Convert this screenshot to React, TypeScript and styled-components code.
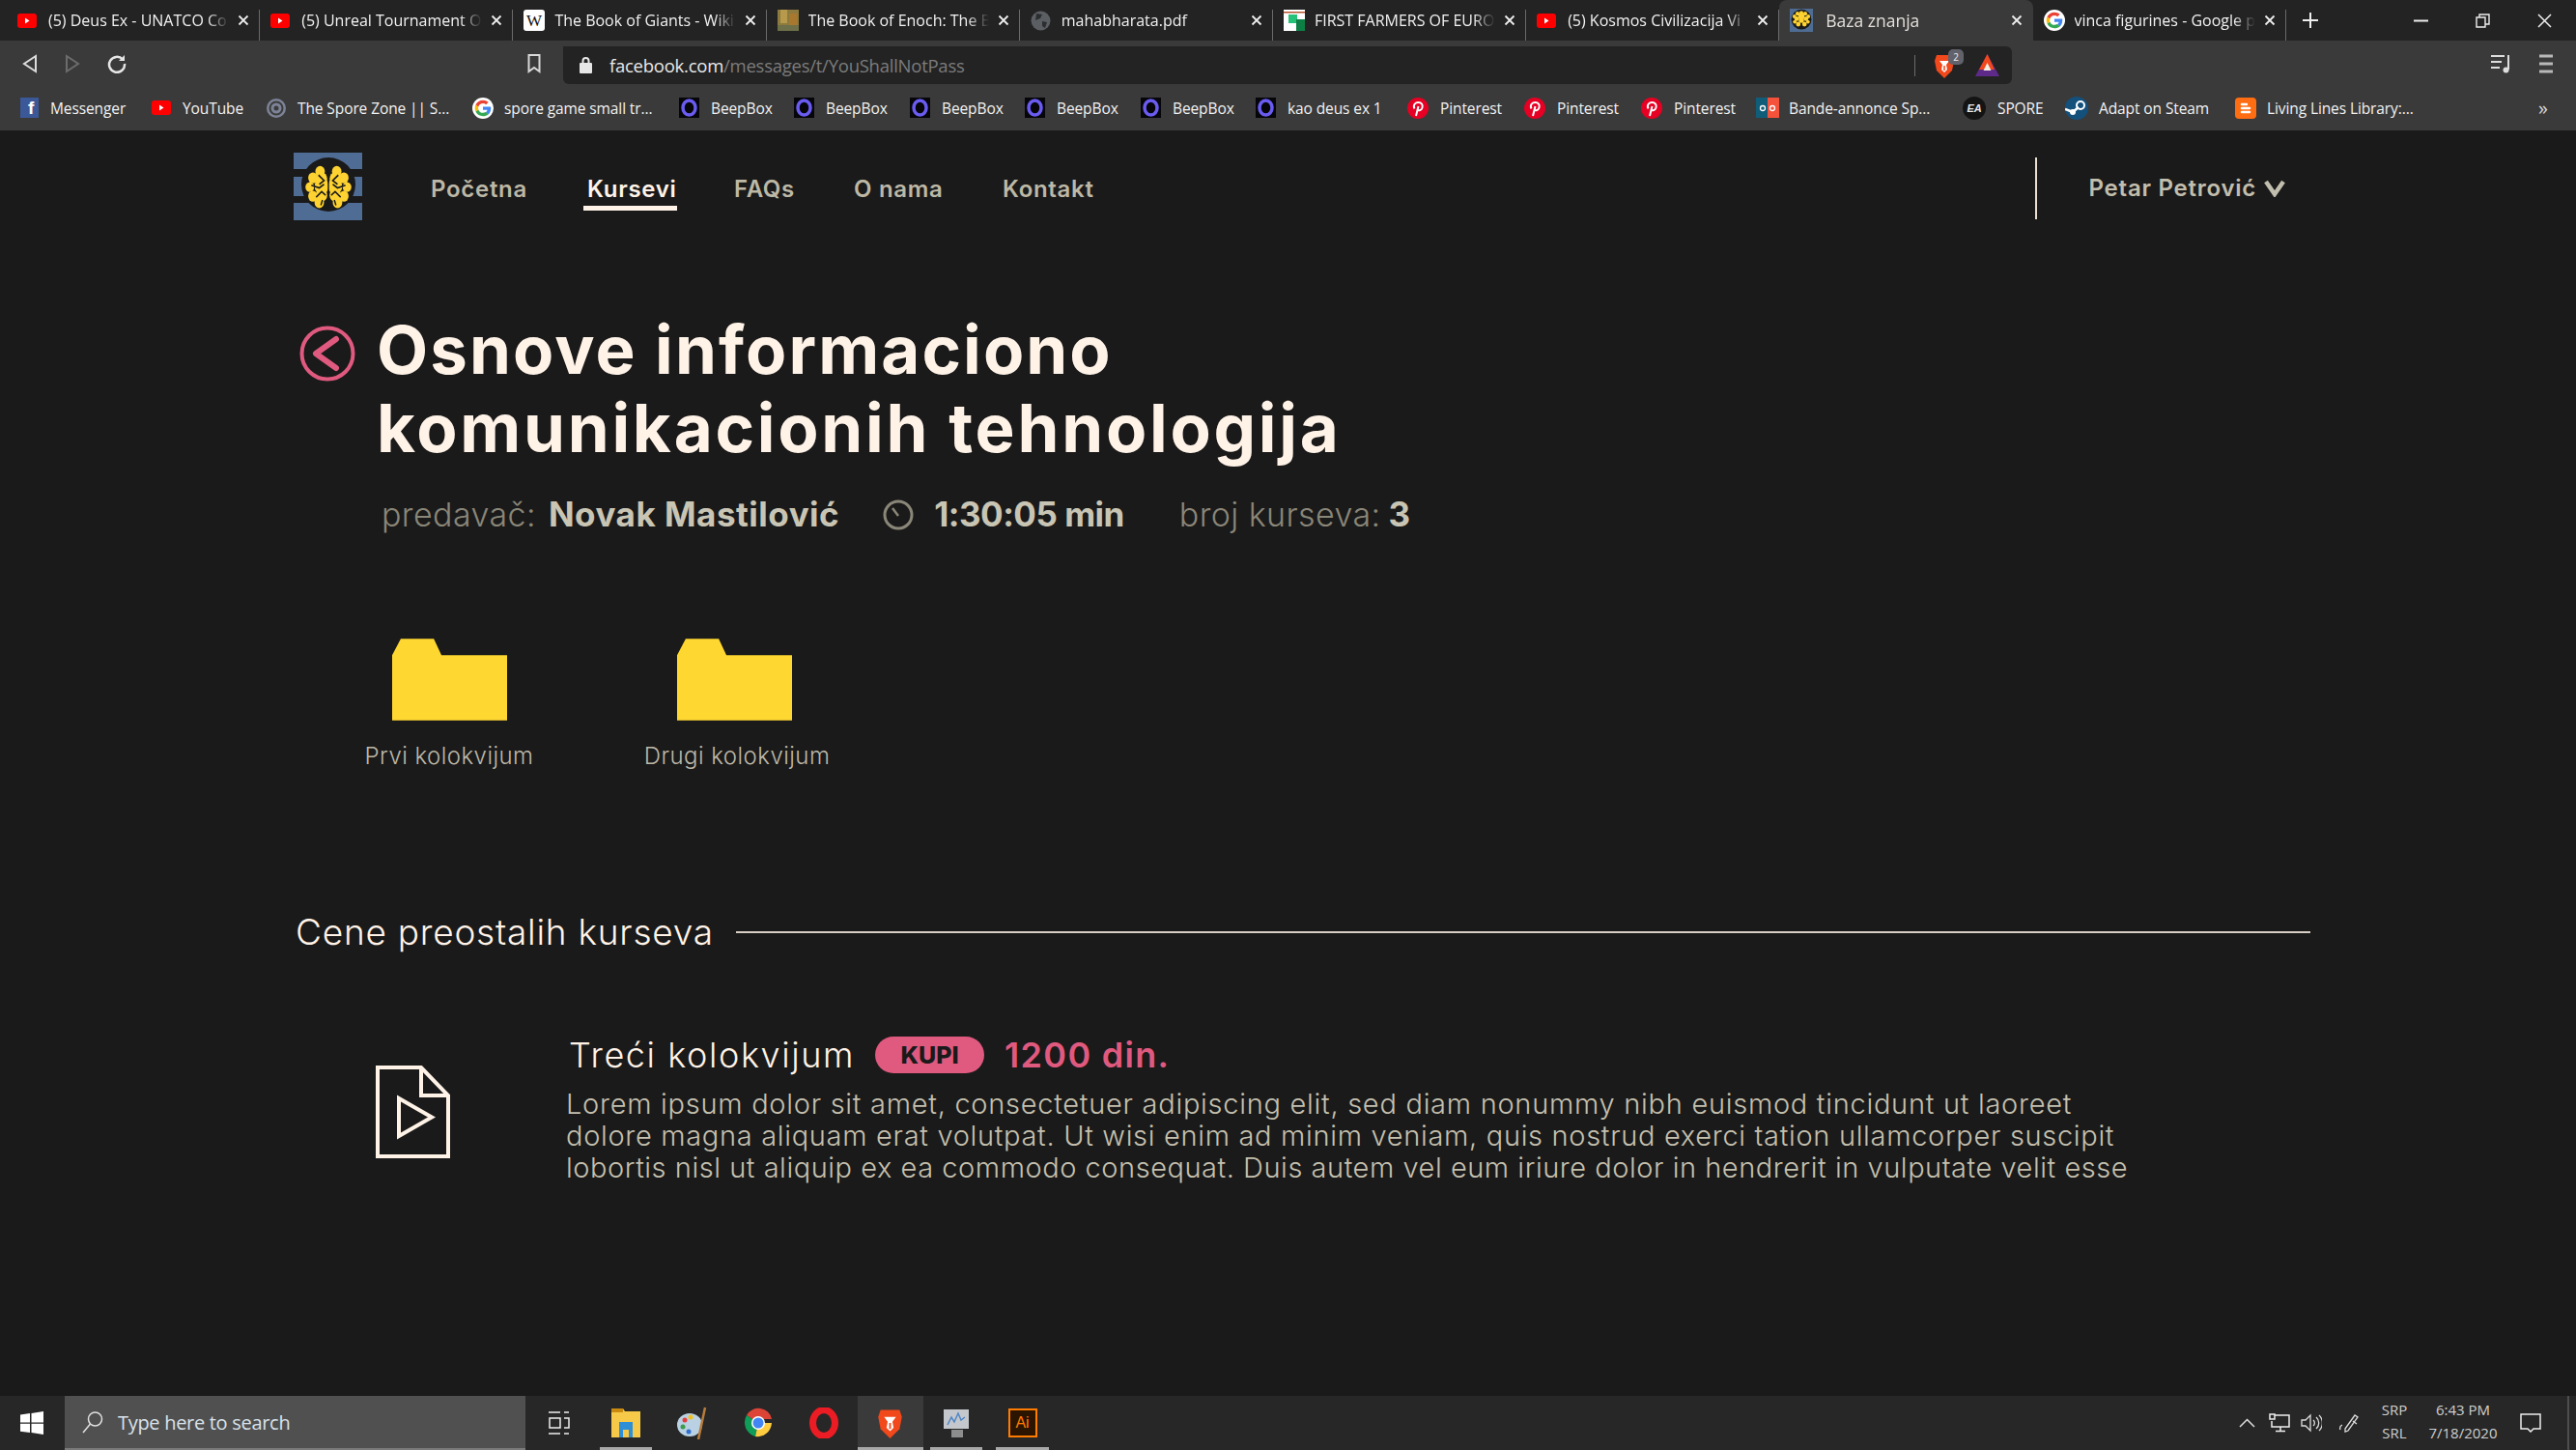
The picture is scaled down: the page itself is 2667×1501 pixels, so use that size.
import React from "react";
import styled, { createGlobalStyle } from "styled-components";

const GlobalStyle = createGlobalStyle`
  html, body { margin: 0; padding: 0; background: #1a1a1a; overflow: hidden; }
  * { box-sizing: border-box; }
`;

const PAGE_FONT = `Inter, "Open Sans", sans-serif`;
const UI_FONT = `"Open Sans", "Noto Sans", sans-serif`;

/* ---------- favicons ---------- */

const YouTubeIco = () => (
  <svg width="20" height="15" viewBox="0 0 20 15"><rect width="20" height="15" rx="3" fill="#f00" /><path d="M8 4.5l4.5 3-4.5 3z" fill="#fff" /></svg>
);
const WikiIco = () => (
  <svg width="22" height="22" viewBox="0 0 22 22"><rect width="22" height="22" rx="3" fill="#fff" /><text x="11" y="17" textAnchor="middle" fontSize="17" fontFamily="Liberation Serif" fill="#111">W</text></svg>
);
const BookIco = () => (
  <svg width="22" height="22" viewBox="0 0 22 22"><rect width="22" height="22" fill="#8d7a3e" /><rect x="3" y="0" width="7" height="14" fill="#b79a4c" /><rect x="12" y="4" width="8" height="12" fill="#a8782f" /><rect y="16" width="22" height="6" fill="#6d7048" /></svg>
);
const GlobeIco = () => (
  <svg width="21" height="21" viewBox="0 0 21 21"><circle cx="10.5" cy="10.5" r="10" fill="#5b5e63" /><path d="M6 3l6 1-2 4-5 2zM12 11l5 1-2 6-3-2z" fill="#2c2d2f" /></svg>
);
const SheetIco = () => (
  <svg width="22" height="22" viewBox="0 0 22 22"><rect width="22" height="22" fill="#fff" /><rect x="0" y="2" width="22" height="1.5" fill="#b5532f" /><rect x="5" y="5" width="9" height="9" fill="#27c27a" /><rect x="13" y="10" width="9" height="12" fill="#0d7f45" /></svg>
);
const BrainDots = () => (
  <g fill="#fdd231">
    <circle cx="15" cy="15" r="3.4" /><circle cx="9" cy="13" r="3" /><circle cx="6" cy="10" r="2.4" /><circle cx="6.5" cy="17" r="2.4" /><circle cx="10" cy="6.5" r="2.6" /><circle cx="15" cy="5.5" r="2.6" /><circle cx="20" cy="6.5" r="2.6" /><circle cx="24" cy="10" r="2.4" /><circle cx="23.5" cy="17" r="2.4" /><circle cx="21" cy="13" r="3" /><circle cx="11" cy="20" r="3" /><circle cx="19" cy="20" r="3" /><circle cx="15" cy="10" r="4" />
  </g>
);
const SmallBrain = () => (
  <svg width="24" height="24" viewBox="0 0 30 30"><rect width="30" height="30" fill="#4f6d94" /><circle cx="15" cy="14" r="13" fill="#1a1a1a" /><BrainDots /></svg>
);
const GoogleIco = ({ size = 22 }: { size?: number }) => (
  <svg width={size} height={size} viewBox="0 0 24 24">
    <circle cx="12" cy="12" r="12" fill="#fff" />
    <path d="M21 12.2c0-.7 0-1.3-.2-1.9H12v3.6h5c-.2 1.2-.9 2.1-1.9 2.8l3 2.3c1.800-1.600 2.900-4 2.900-6.800z" fill="#4285f4" />
    <path d="M12 21c2.500 0 4.500-.8 6.100-2.300l-3-2.300c-.8.600-1.900.9-3.100.9-2.400 0-4.400-1.600-5.100-3.800l-3.100 2.400C5.300 19 8.400 21 12 21z" fill="#34a853" />
    <path d="M6.900 13.500c-.4-1-.4-2.100 0-3.100L3.800 8c-1.100 2.500-1.100 5.400 0 7.900z" fill="#fbbc05" />
    <path d="M12 6.600c1.300 0 2.500.5 3.500 1.400L18.200 5.300C16.500 3.800 14.400 3 12 3 8.400 3 5.300 5 3.800 8l3.100 2.400C7.600 8.200 9.600 6.600 12 6.600z" fill="#ea4335" />
  </svg>
);
const FacebookIco = styled.span`
  flex: 0 0 19px;
  width: 19px;
  height: 21px;
  padding-left: 8px;
  background: #3b5998;
  color: #fff;
  font-family: "Liberation Sans", sans-serif;
  font-size: 19px;
  font-weight: 700;
  line-height: 22px;
  letter-spacing: 0;
`;
const SporeIco = () => (
  <svg width="22" height="22" viewBox="0 0 22 22"><circle cx="11" cy="11" r="10" fill="#7d8397" /><circle cx="11" cy="11" r="6.500" fill="none" stroke="#3a3a3a" strokeWidth="2" /><circle cx="11" cy="11" r="2.500" fill="#3a3a3a" /></svg>
);
const BeepIco = () => (
  <svg width="21" height="21" viewBox="0 0 21 21"><rect width="21" height="21" fill="#05050a" /><ellipse cx="10.500" cy="10.500" rx="6.500" ry="7.500" fill="none" stroke="#6a5cf0" strokeWidth="3.500" /></svg>
);
const PinterestIco = () => (
  <svg width="22" height="22" viewBox="0 0 22 22"><circle cx="11" cy="11" r="11" fill="#e60023" /><path d="M9 19l2.500-10M7.500 11.500c-2-4 1-6.500 4-6.500s5 2.200 4 5.500-4.500 3.500-5 1.500" fill="none" stroke="#fff" strokeWidth="2" /></svg>
);
const BandeIco = () => (
  <svg width="24" height="21" viewBox="0 0 24 21"><rect width="12" height="21" fill="#0f5d78" /><rect x="12" width="12" height="21" fill="#f4523a" /><circle cx="7" cy="11" r="2.500" fill="none" stroke="#fff" strokeWidth="1.300" /><circle cx="17" cy="11" r="2.500" fill="none" stroke="#fff" strokeWidth="1.300" /></svg>
);
const EaIco = () => (
  <svg width="24" height="24" viewBox="0 0 24 24"><circle cx="12" cy="12" r="12" fill="#141414" /><text x="12" y="16" textAnchor="middle" fontSize="11" fontWeight="700" fontStyle="italic" fontFamily="Liberation Sans" fill="#e8e8e8">EA</text></svg>
);
const SteamIco = () => (
  <svg width="24" height="24" viewBox="0 0 24 24"><circle cx="12" cy="12" r="12" fill="#14507c" /><path d="M0 13l8 3 6-5" stroke="#fff" strokeWidth="2.500" fill="none" /><circle cx="16" cy="9" r="4" fill="none" stroke="#fff" strokeWidth="2" /><circle cx="8" cy="16" r="3" fill="#fff" /></svg>
);
const BloggerIco = () => (
  <svg width="22" height="22" viewBox="0 0 22 22"><rect width="22" height="22" rx="4" fill="#ff6d12" /><path d="M7 7h5M7 11h8M7 15h8" stroke="#fff" strokeWidth="2.500" strokeLinecap="round" /></svg>
);
const BraveIco = ({ w = 22, h = 26 }: { w?: number; h?: number }) => (
  <svg width={w} height={h} viewBox="0 0 22 26">
    <path d="M3 2h16l2 6-2 10-8 8-8-8L1 8z" fill="#f1481c" />
    <path d="M6 8h10l-3 4 1 5-3 3-3-3 1-5z" fill="#fff" />
    <path d="M11 13v5" stroke="#f1481c" strokeWidth="1.500" />
  </svg>
);

/* ---------- browser chrome ---------- */

const TabStrip = styled.div`
  display: flex;
  align-items: stretch;
  height: 42px;
  padding-left: 7px;
  background: #232323;
  font-family: ${UI_FONT};
`;

const Tab = styled.div<{ $active?: boolean }>`
  position: relative;
  display: flex;
  align-items: center;
  width: 262.2px;
  padding: 0 11px;
  background: ${(p) => (p.$active ? "#3a3a3a" : "transparent")};
  border-radius: ${(p) => (p.$active ? "8px 8px 0 0" : "0")};
  &::after {
    content: "";
    display: ${(p) => (p.$active ? "none" : "block")};
    position: absolute;
    right: 0;
    top: 10px;
    bottom: 0;
    width: 1px;
    background: #6a6a6a;
  }
`;

const TabIcon = styled.span`
  flex: 0 0 25px;
  display: flex;
  align-items: center;
  justify-content: flex-start;
  margin-right: 7px;
`;

const TabTitle = styled.span<{ $active?: boolean }>`
  flex: 1;
  min-width: 0;
  margin-left: ${(p) => (p.$active ? "5px" : "0")};
  white-space: nowrap;
  font-size: ${(p) => (p.$active ? "17.5px" : "16px")};
  color: ${(p) => (p.$active ? "#e4dfda" : "#f1f1f1")};
  -webkit-mask: linear-gradient(to right, #000 88%, transparent 100%) no-repeat;
  mask: linear-gradient(to right, #000 88%, transparent 100%) no-repeat;
`;

const TabClose = styled.span`
  flex: 0 0 12px;
  margin-left: 9px;
  display: flex;
`;

const CloseGlyph = () => (
  <svg width="12" height="12" viewBox="0 0 12 12"><path d="M1.500 1.500l9 9M10.500 1.500l-9 9" stroke="#eee" strokeWidth="1.800" /></svg>
);

const NewTab = styled.span`
  margin-left: 17px;
  display: flex;
  align-items: center;
`;

const WindowControls = styled.div`
  margin-left: auto;
  display: flex;
  align-items: center;
  gap: 49px;
  padding-right: 25px;
`;

const Toolbar = styled.div`
  display: flex;
  align-items: center;
  height: 46px;
  background: #3a3a3a;
  padding: 2px 0 0 23px;
  font-family: ${UI_FONT};
`;

const NavIcons = styled.div`
  display: flex;
  align-items: center;
  gap: 28px;
  width: 523px;
`;

const Omnibox = styled.div`
  display: flex;
  align-items: center;
  width: 1500px;
  height: 39px;
  margin-left: 23px;
  margin-top: 3px;
  padding: 0 13px 0 17px;
  background: #232323;
  border-radius: 0 6px 6px 6px;
`;

const UrlHost = styled.span`
  margin-left: 18px;
  font-size: 18.5px;
  letter-spacing: -0.25px;
  color: #e8e8e8;
`;

const UrlPath = styled.span`
  font-size: 18.5px;
  letter-spacing: -0.25px;
  color: #7c7c7c;
`;

const OmniRight = styled.div`
  margin-left: auto;
  display: flex;
  align-items: center;
  gap: 21px;
  padding-left: 19px;
  border-left: 1px solid #6b6b6b;
  height: 22px;
`;

const BraveWrap = styled.span`
  position: relative;
  display: flex;
`;

const BraveBadge = styled.span`
  position: absolute;
  left: 15px;
  top: -4px;
  width: 16px;
  height: 16px;
  border-radius: 5px;
  background: #62626c;
  color: #eee;
  font-size: 10px;
  line-height: 16px;
  text-align: center;
`;

const ToolRight = styled.div`
  margin-left: auto;
  display: flex;
  align-items: center;
  gap: 28px;
  padding-right: 24px;
`;

const BookmarkBar = styled.div`
  display: flex;
  align-items: center;
  height: 47px;
  padding: 0 29px 0 21px;
  background: #3a3a3a;
  font-family: ${UI_FONT};
`;

const Bookmark = styled.div<{ $w: number; $gap: number }>`
  display: flex;
  align-items: center;
  flex: 0 0 ${(p) => p.$w}px;
  gap: ${(p) => p.$gap}px;
  font-size: 15.500px;
  letter-spacing: -0.1px;
  color: #f2f2f2;
  white-space: nowrap;
`;

const MoreMarks = styled.span`
  margin-left: auto;
  color: #d8d8d8;
  font-size: 20px;
`;

/* ---------- page ---------- */

const Screen = styled.div`
  display: flex;
  flex-direction: column;
  width: 2667px;
  height: 1501px;
  background: #1a1a1a;
`;

const Main = styled.main`
  flex: 1;
  padding: 23px 275px 0 304px;
  font-family: ${PAGE_FONT};
`;

const TopNav = styled.nav`
  display: flex;
  align-items: center;
  height: 70px;
`;

const NavLinks = styled.div`
  display: flex;
  align-items: center;
  margin-left: 71px;
  padding-top: 4px;
`;

const NavLink = styled.a<{ $active?: boolean; $w: number }>`
  position: relative;
  display: block;
  width: ${(p) => p.$w}px;
  font-size: 24px;
  font-weight: 600;
  letter-spacing: 0.7px;
  color: ${(p) => (p.$active ? "#fff3e8" : "#bdb8a6")};
  &::after {
    content: "";
    display: ${(p) => (p.$active ? "block" : "none")};
    position: absolute;
    left: -4px;
    top: 32px;
    width: 97px;
    height: 5px;
    background: #fff3e8;
  }
`;

const UserBox = styled.div`
  margin-left: auto;
  display: flex;
  align-items: center;
  height: 64px;
  margin-top: 3px;
  padding-left: 54px;
  padding-right: 26px;
  border-left: 2px solid #e9dfd3;
`;

const UserName = styled.span`
  font-size: 24px;
  font-weight: 600;
  letter-spacing: 0.75px;
  color: #c2bead;
  margin-right: 8px;
`;

const TitleRow = styled.div`
  display: flex;
  align-items: flex-start;
  margin-top: 94px;
`;

const BackButton = styled.span`
  display: flex;
  margin-left: 6px;
  margin-top: 15px;
  margin-right: 22px;
`;

const Title = styled.h1`
  margin: 0;
  font-size: 69px;
  line-height: 81px;
  font-weight: 700;
  color: #fff3e8;
`;

const TitleLine = styled.span<{ $ls: number }>`
  display: block;
  letter-spacing: ${(p) => p.$ls}px;
  white-space: nowrap;
`;

const MetaRow = styled.div`
  display: flex;
  align-items: baseline;
  margin-top: 26px;
  margin-left: 91px;
  line-height: 44px;
`;

const MetaLabel = styled.span<{ $left?: number }>`
  margin-left: ${(p) => p.$left ?? 0}px;
  font-size: 34px;
  font-weight: 300;
  letter-spacing: 0.4px;
  color: #8a8678;
`;

const MetaValue = styled.span<{ $left?: number; $ls?: number }>`
  margin-left: ${(p) => p.$left ?? 0}px;
  font-size: 35px;
  letter-spacing: ${(p) => p.$ls ?? 0}px;
  color: #c9c5b4;
  font-weight: 700;
`;

const ClockWrap = styled.span`
  align-self: center;
  display: flex;
  margin-left: 45px;
  margin-right: 21px;
`;

const Folders = styled.div`
  display: flex;
  margin-top: 106px;
  margin-left: 36px;
`;

const FolderItem = styled.div<{ $w: number }>`
  display: flex;
  flex-direction: column;
  align-items: center;
  width: ${(p) => p.$w}px;
`;

const FolderLabel = styled.span<{ $shift?: number }>`
  margin-top: 20px;
  margin-left: ${(p) => p.$shift ?? 0}px;
  font-size: 24px;
  line-height: 34px;
  font-weight: 300;
  letter-spacing: 0.45px;
  color: #bdb8a9;
  white-space: nowrap;
`;

const SectionHead = styled.div`
  display: flex;
  align-items: center;
  gap: 23px;
  margin-top: 141px;
  margin-left: 2px;
`;

const SectionTitle = styled.h2`
  margin: 0;
  font-size: 37px;
  line-height: 48px;
  font-weight: 300;
  letter-spacing: 0.75px;
  color: #fff3e8;
  white-space: nowrap;
`;

const SectionLine = styled.span`
  flex: 1;
  height: 2px;
  background: #d8cfc4;
`;

const CourseRow = styled.div`
  display: flex;
  margin-top: 84px;
`;

const CourseIcon = styled.span`
  display: flex;
  margin-left: 85px;
  margin-top: 30px;
  margin-right: 123px;
  flex: 0 0 auto;
`;

const CourseHead = styled.div`
  display: flex;
  align-items: center;
  gap: 21px;
  height: 38px;
`;

const CourseName = styled.span`
  font-size: 36px;
  font-weight: 300;
  letter-spacing: 1.6px;
  color: #fff3e8;
`;

const BuyPill = styled.span`
  display: flex;
  align-items: center;
  justify-content: center;
  width: 113px;
  height: 38px;
  border-radius: 19px;
  background: #e0597f;
  color: #1a1a1a;
  font-size: 25px;
  font-weight: 800;
`;

const Price = styled.span`
  font-size: 36px;
  font-weight: 600;
  letter-spacing: 1.3px;
  color: #e0597f;
`;

const CourseText = styled.p`
  margin: 15px 0 0 -3px;
  font-size: 29px;
  line-height: 33px;
  font-weight: 300;
  color: #c5c0af;
  white-space: nowrap;
`;

const CourseLine = styled.span<{ $ls: number }>`
  display: block;
  letter-spacing: ${(p) => p.$ls}px;
`;

/* ---------- taskbar ---------- */

const Taskbar = styled.div`
  display: flex;
  align-items: stretch;
  height: 56px;
  background: #272727;
  font-family: ${UI_FONT};
  color: #e8e8e8;
`;

const StartSlot = styled.div`
  flex: 0 0 67px;
  display: flex;
  align-items: center;
  padding-left: 21px;
`;

const SearchBox = styled.div`
  flex: 0 0 477px;
  display: flex;
  align-items: center;
  gap: 14px;
  padding-left: 17px;
  background: #505050;
  border-bottom: 2px solid #7a7a7a;
  color: #d9e2ea;
  font-size: 20px;
  letter-spacing: -0.3px;
`;

const TaskSlot = styled.div<{ $on?: boolean; $current?: boolean }>`
  position: relative;
  flex: 0 0 68.400px;
  display: flex;
  align-items: center;
  justify-content: center;
  background: ${(p) => (p.$current ? "#3a3a3a" : "transparent")};
  &::after {
    content: "";
    display: ${(p) => (p.$on ? "block" : "none")};
    position: absolute;
    bottom: 0;
    left: ${(p) => (p.$current ? "0" : "7px")};
    right: ${(p) => (p.$current ? "0" : "7px")};
    height: 3px;
    background: #a8a8a8;
  }
`;

const TaskViewSlot = styled.div`
  flex: 0 0 70px;
  display: flex;
  align-items: center;
  justify-content: center;
`;

const AiIcon = styled.span`
  width: 30px;
  height: 30px;
  display: flex;
  align-items: center;
  justify-content: center;
  border: 2px solid #ff7c00;
  background: #2b1400;
  color: #ff7c00;
  font-size: 16px;
  font-family: "Liberation Sans", sans-serif;
`;

const Tray = styled.div`
  margin-left: auto;
  display: flex;
  align-items: center;
  padding-right: 7px;
`;

const TrayIcon = styled.span<{ $left: number }>`
  display: flex;
  margin-left: ${(p) => p.$left}px;
`;

const TrayText = styled.div<{ $w: number; $left: number }>`
  width: ${(p) => p.$w}px;
  margin-left: ${(p) => p.$left}px;
  display: flex;
  flex-direction: column;
  align-items: center;
  gap: 3px;
  margin-top: -3px;
  font-size: 15px;
  line-height: 21px;
  color: #cfcfcf;
`;

const TrayEdge = styled.span`
  width: 2px;
  height: 56px;
  margin-left: 27px;
  background: #4d4d4d;
`;

/* ---------- data ---------- */

const tabs = [
  { icon: <YouTubeIco />, title: "(5) Deus Ex - UNATCO Co" },
  { icon: <YouTubeIco />, title: "(5) Unreal Tournament OS" },
  { icon: <WikiIco />, title: "The Book of Giants - Wiki" },
  { icon: <BookIco />, title: "The Book of Enoch: The B" },
  { icon: <GlobeIco />, title: "mahabharata.pdf" },
  { icon: <SheetIco />, title: "FIRST FARMERS OF EURO" },
  { icon: <YouTubeIco />, title: "(5) Kosmos Civilizacija Vi" },
  { icon: <SmallBrain />, title: "Baza znanja", active: true },
  { icon: <GoogleIco />, title: "vinca figurines - Google p" },
];

const bookmarks: { icon: React.ReactNode; label: string; w: number; gap?: number }[] = [
  { icon: <FacebookIco>f</FacebookIco>, label: "Messenger", w: 136 },
  { icon: <YouTubeIco />, label: "YouTube", w: 118 },
  { icon: <SporeIco />, label: "The Spore Zone || S...", w: 214, gap: 11 },
  { icon: <GoogleIco />, label: "spore game small tr...", w: 214, gap: 11 },
  { icon: <BeepIco />, label: "BeepBox", w: 119 },
  { icon: <BeepIco />, label: "BeepBox", w: 120 },
  { icon: <BeepIco />, label: "BeepBox", w: 119 },
  { icon: <BeepIco />, label: "BeepBox", w: 120 },
  { icon: <BeepIco />, label: "BeepBox", w: 119 },
  { icon: <BeepIco />, label: "kao deus ex 1", w: 157 },
  { icon: <PinterestIco />, label: "Pinterest", w: 121 },
  { icon: <PinterestIco />, label: "Pinterest", w: 121 },
  { icon: <PinterestIco />, label: "Pinterest", w: 119 },
  { icon: <BandeIco />, label: "Bande-annonce Sp...", w: 214, gap: 10 },
  { icon: <EaIco />, label: "SPORE", w: 106, gap: 12 },
  { icon: <SteamIco />, label: "Adapt on Steam", w: 176, gap: 11 },
  { icon: <BloggerIco />, label: "Living Lines Library:...", w: 240, gap: 11 },
];

const navItems = [
  { label: "Početna", w: 162 },
  { label: "Kursevi", w: 152, active: true },
  { label: "FAQs", w: 124 },
  { label: "O nama", w: 154 },
  { label: "Kontakt", w: 110 },
];

const Logo = () => (
  <svg width="71" height="70" viewBox="0 0 71 70">
    <rect width="71" height="70" fill="#4f6d94" />
    <rect y="17" width="71" height="8" fill="#1a1a1a" />
    <rect y="45" width="71" height="7" fill="#1a1a1a" />
    <circle cx="36" cy="33" r="28" fill="#1a1a1a" />
    <g transform="translate(36 37.500) scale(0.82 0.95) translate(-35.500 -33)">
      <g fill="#fdd231">
        <circle cx="25" cy="14" r="6" /><circle cx="16" cy="21" r="6" /><circle cx="12" cy="31" r="5.500" /><circle cx="16" cy="41" r="6" /><circle cx="24" cy="48" r="6" /><circle cx="27" cy="30" r="9" /><circle cx="27" cy="22" r="7" /><circle cx="27" cy="40" r="7" />
        <circle cx="46" cy="14" r="6" /><circle cx="55" cy="21" r="6" /><circle cx="59" cy="31" r="5.500" /><circle cx="55" cy="41" r="6" /><circle cx="47" cy="48" r="6" /><circle cx="44" cy="30" r="9" /><circle cx="44" cy="22" r="7" /><circle cx="44" cy="40" r="7" />
      </g>
      <path d="M35.500 10v44M23 18l7 6-6 4M14 29l10 3 6-4M20 42l7-6 5 4M26 51l2-6M48 18l-7 6 6 4M57 29l-10 3-6-4M51 42l-7-6-5 4M45 51l-2-6" fill="none" stroke="#1a1a1a" strokeWidth="1.800" />
    </g>
  </svg>
);

const App = () => {
  return (
    <Screen>
      <GlobalStyle />
      <TabStrip>
        {tabs.map((t) => (
          <Tab key={t.title} $active={t.active}>
            <TabIcon>{t.icon}</TabIcon>
            <TabTitle $active={t.active}>{t.title}</TabTitle>
            <TabClose><CloseGlyph /></TabClose>
          </Tab>
        ))}
        <NewTab>
          <svg width="16" height="16" viewBox="0 0 16 16"><path d="M8 0v16M0 8h16" stroke="#eee" strokeWidth="2" /></svg>
        </NewTab>
        <WindowControls>
          <svg width="15" height="15" viewBox="0 0 15 15"><path d="M0 7.500h15" stroke="#eee" strokeWidth="2" /></svg>
          <svg width="15" height="15" viewBox="0 0 15 15"><path d="M1 4h9v10H1zM4 4V1h10v10h-4" fill="none" stroke="#eee" strokeWidth="1.400" /></svg>
          <svg width="15" height="15" viewBox="0 0 15 15"><path d="M1 1l13 13M14 1L1 14" stroke="#eee" strokeWidth="1.500" /></svg>
        </WindowControls>
      </TabStrip>

      <Toolbar>
        <NavIcons>
          <svg width="16" height="20" viewBox="0 0 16 20"><path d="M14 2v16L2 10z" fill="none" stroke="#dcdcdc" strokeWidth="2" /></svg>
          <svg width="16" height="20" viewBox="0 0 16 20"><path d="M2 2v16l12-8z" fill="none" stroke="#6c6c6c" strokeWidth="2" /></svg>
          <svg width="20" height="20" viewBox="0 0 20 20"><path d="M16 5.500A8 8 0 1 0 18 10" fill="none" stroke="#e6e6e6" strokeWidth="2.500" /><path d="M18 1v6h-6z" fill="#e6e6e6" /></svg>
        </NavIcons>
        <svg width="14" height="20" viewBox="0 0 14 20"><path d="M1.500 1h11v17L7 14l-5.500 4z" fill="none" stroke="#d8d8d8" strokeWidth="2" /></svg>
        <Omnibox>
          <svg width="13" height="17" viewBox="0 0 13 17"><rect y="6" width="13" height="11" rx="1" fill="#e6e6e6" /><path d="M3.500 7V4a3 3 0 0 1 6 0v3" fill="none" stroke="#e6e6e6" strokeWidth="2" /></svg>
          <UrlHost>facebook.com</UrlHost>
          <UrlPath>/messages/t/YouShallNotPass</UrlPath>
          <OmniRight>
            <BraveWrap>
              <BraveIco />
              <BraveBadge>2</BraveBadge>
            </BraveWrap>
            <svg width="25" height="23" viewBox="0 0 25 23">
              <path d="M12.500 0L25 23H0z" fill="#5e2a8a" />
              <path d="M12.500 0L20 16H4z" fill="#f1481c" />
              <path d="M12.500 9l4 8h-8z" fill="#f4f0e8" />
            </svg>
          </OmniRight>
        </Omnibox>
        <ToolRight>
          <svg width="22" height="22" viewBox="0 0 22 22"><path d="M0 3h14M0 9h11M0 15h9" stroke="#ddd" strokeWidth="2" /><path d="M18 2v15" stroke="#ddd" strokeWidth="2" /><circle cx="15.500" cy="17.500" r="3" fill="#ddd" /></svg>
          <svg width="14" height="20" viewBox="0 0 14 20"><path d="M0 2h14M0 10h14M0 18h14" stroke="#b8b8b8" strokeWidth="3" /></svg>
        </ToolRight>
      </Toolbar>

      <BookmarkBar>
        {bookmarks.map((b, i) => (
          <Bookmark key={i} $w={b.w} $gap={b.gap ?? 12}>
            {b.icon}
            <span>{b.label}</span>
          </Bookmark>
        ))}
        <MoreMarks>»</MoreMarks>
      </BookmarkBar>

      <Main>
        <TopNav>
          <Logo />
          <NavLinks>
            {navItems.map((n) => (
              <NavLink key={n.label} $active={n.active} $w={n.w}>{n.label}</NavLink>
            ))}
          </NavLinks>
          <UserBox>
            <UserName>Petar Petrović</UserName>
            <svg width="22" height="18" viewBox="0 0 22 18"><path d="M2 2l9 13 9-13" fill="none" stroke="#c2bead" strokeWidth="4.500" /></svg>
          </UserBox>
        </TopNav>

        <TitleRow>
          <BackButton>
            <svg width="58" height="58" viewBox="0 0 58 58">
              <circle cx="29" cy="29" r="26.500" fill="none" stroke="#e0597f" strokeWidth="4" />
              <path d="M38 14L17 29l21 15" fill="none" stroke="#e0597f" strokeWidth="6" strokeLinecap="round" strokeLinejoin="round" />
            </svg>
          </BackButton>
          <Title>
            <TitleLine $ls={2.1}>Osnove informaciono</TitleLine>
            <TitleLine $ls={2.75}>komunikacionih tehnologija</TitleLine>
          </Title>
        </TitleRow>

        <MetaRow>
          <MetaLabel>predavač:</MetaLabel>
          <MetaValue $left={13} $ls={0.5}>Novak Mastilović</MetaValue>
          <ClockWrap>
            <svg width="32" height="32" viewBox="0 0 32 32">
              <circle cx="16" cy="16" r="14" fill="none" stroke="#8a8678" strokeWidth="3" />
              <path d="M10 9l6 8" stroke="#8a8678" strokeWidth="2.500" />
            </svg>
          </ClockWrap>
          <MetaValue $ls={-0.5}>1:30:05 min</MetaValue>
          <MetaLabel $left={57}>broj kurseva:</MetaLabel>
          <MetaValue $left={8}>3</MetaValue>
        </MetaRow>

        <Folders>
          <FolderItem $w={250}>
            <svg width="119" height="85" viewBox="0 0 120 85"><path d="M0 17L9 0h34.500L51.500 17H120v68H0z" fill="#ffd731" /></svg>
            <FolderLabel>Prvi kolokvijum</FolderLabel>
          </FolderItem>
          <FolderItem $w={340}>
            <svg width="119" height="85" viewBox="0 0 120 85"><path d="M0 17L9 0h34.500L51.500 17H120v68H0z" fill="#ffd731" /></svg>
            <FolderLabel $shift={6}>Drugi kolokvijum</FolderLabel>
          </FolderItem>
        </Folders>

        <SectionHead>
          <SectionTitle>Cene preostalih kurseva</SectionTitle>
          <SectionLine />
        </SectionHead>

        <CourseRow>
          <CourseIcon>
            <svg width="77" height="96" viewBox="0 0 77 96" fill="none" stroke="#fff3e8" strokeWidth="4">
              <path d="M2 2h45l28 29v63H2z" />
              <path d="M47 2v29h28" />
              <path d="M24 34v39l34-19.500z" />
            </svg>
          </CourseIcon>
          <div>
            <CourseHead>
              <CourseName>Treći kolokvijum</CourseName>
              <BuyPill>KUPI</BuyPill>
              <Price>1200 din.</Price>
            </CourseHead>
            <CourseText>
              <CourseLine $ls={0.72}>Lorem ipsum dolor sit amet, consectetuer adipiscing elit, sed diam nonummy nibh euismod tincidunt ut laoreet</CourseLine>
              <CourseLine $ls={0.68}>dolore magna aliquam erat volutpat. Ut wisi enim ad minim veniam, quis nostrud exerci tation ullamcorper suscipit</CourseLine>
              <CourseLine $ls={0.53}>lobortis nisl ut aliquip ex ea commodo consequat. Duis autem vel eum iriure dolor in hendrerit in vulputate velit esse</CourseLine>
            </CourseText>
          </div>
        </CourseRow>
      </Main>

      <Taskbar>
        <StartSlot>
          <svg width="24" height="24" viewBox="0 0 24 24" fill="#fff"><path d="M0 3.500l10-1.400v9.400H0zM11.500 1.900L24 0v11.500H11.500zM0 12.800h10v9.300L0 20.700zM11.500 12.800H24V24l-12.500-1.900z" /></svg>
        </StartSlot>
        <SearchBox>
          <svg width="24" height="24" viewBox="0 0 24 24" fill="none" stroke="#e0e0e0" strokeWidth="1.500"><circle cx="14.500" cy="9" r="7" /><path d="M9.500 14L2 23" /></svg>
          Type here to search
        </SearchBox>
        <TaskViewSlot>
          <svg width="22" height="24" viewBox="0 0 22 24" fill="none" stroke="#eee" strokeWidth="1.500"><path d="M0 1h12M0 23h12M1 7h11v10H1zM16 1h5M16 7h5v10h-5M16 23h5" /></svg>
        </TaskViewSlot>
        <TaskSlot $on>
          <svg width="30" height="30" viewBox="0 0 30 30"><path d="M0 0h12l2 3h16v27H0z" fill="#f7c948" /><rect width="12" height="4" fill="#c98a10" /><path d="M8 14h14v16h-4v-8h-6v8H8z" fill="#2f8fd6" /></svg>
        </TaskSlot>
        <TaskSlot>
          <svg width="34" height="34" viewBox="0 0 34 34"><ellipse cx="14" cy="19" rx="13" ry="12" fill="#b9d1e2" /><circle cx="9" cy="14" r="2.500" fill="#e53d3d" /><circle cx="15" cy="11" r="2.500" fill="#f0c020" /><circle cx="7" cy="21" r="2.500" fill="#3c9c4c" /><circle cx="13" cy="26" r="2.500" fill="#2f6fd0" /><path d="M30 1l-7 33" stroke="#b87c3c" strokeWidth="2.500" /></svg>
        </TaskSlot>
        <TaskSlot>
          <svg width="32" height="32" viewBox="0 0 32 32">
            <path d="M16 16L4 8A14 14 0 0 1 30 12H16z" fill="#db4437" />
            <path d="M16 16L4 8A15 15 0 0 0 13 30z" fill="#0f9d58" />
            <path d="M16 16H30A15 15 0 0 1 13 30z" fill="#ffcd40" />
            <circle cx="16" cy="16" r="7" fill="#fff" />
            <circle cx="16" cy="16" r="5.500" fill="#4285f4" />
          </svg>
        </TaskSlot>
        <TaskSlot>
          <svg width="32" height="32" viewBox="0 0 32 32"><ellipse cx="16" cy="16" rx="11.500" ry="13.500" fill="none" stroke="#ec1c24" strokeWidth="7" /></svg>
        </TaskSlot>
        <TaskSlot $on $current>
          <BraveIco w={27} h={32} />
        </TaskSlot>
        <TaskSlot $on>
          <svg width="30" height="32" viewBox="0 0 30 32"><rect x="2" y="2" width="26" height="20" fill="#c4c8cc" /><path d="M6 18l4-8 3 5 4-9 3 7 4-3" fill="none" stroke="#4f86c6" strokeWidth="1.500" /><rect x="10" y="23" width="12" height="8" fill="#8d8d8d" /></svg>
        </TaskSlot>
        <TaskSlot $on>
          <AiIcon>Ai</AiIcon>
        </TaskSlot>
        <Tray>
          <TrayIcon $left={0}>
            <svg width="17" height="10" viewBox="0 0 17 10"><path d="M1 9l7.500-7.500L16 9" fill="none" stroke="#ddd" strokeWidth="1.500" /></svg>
          </TrayIcon>
          <TrayIcon $left={14}>
            <svg width="22" height="20" viewBox="0 0 22 20" fill="none" stroke="#eee" strokeWidth="1.500"><path d="M6 2h15v12H3V8M12 14v4M7 18.500h10" /><rect x="1" y="1" width="5" height="5" /></svg>
          </TrayIcon>
          <TrayIcon $left={11}>
            <svg width="22" height="20" viewBox="0 0 22 20" fill="none" stroke="#ddd" strokeWidth="1.300"><path d="M1 7h4l5-5v16l-5-5H1z" /><path d="M13 7a4 4 0 0 1 0 6M16 4a8 8 0 0 1 0 12M19 2a11 11 0 0 1 0 16" /></svg>
          </TrayIcon>
          <TrayIcon $left={17}>
            <svg width="22" height="22" viewBox="0 0 22 22" fill="none" stroke="#ddd" strokeWidth="1.300"><path d="M7 17L17 3l3 2-10 14-3 1zM4 13a4 4 0 0 0-2 5M15 9l4 3" /></svg>
          </TrayIcon>
          <TrayText $w={30} $left={21}>
            <span>SRP</span>
            <span>SRL</span>
          </TrayText>
          <TrayText $w={84} $left={14}>
            <span>6:43 PM</span>
            <span>7/18/2020</span>
          </TrayText>
          <TrayIcon $left={17}>
            <svg width="22" height="20" viewBox="0 0 22 20" fill="none" stroke="#eee" strokeWidth="1.500"><path d="M1 1h20v15h-7l-3 3-3-3H1z" /></svg>
          </TrayIcon>
          <TrayEdge />
        </Tray>
      </Taskbar>
    </Screen>
  );
};

export default App;
